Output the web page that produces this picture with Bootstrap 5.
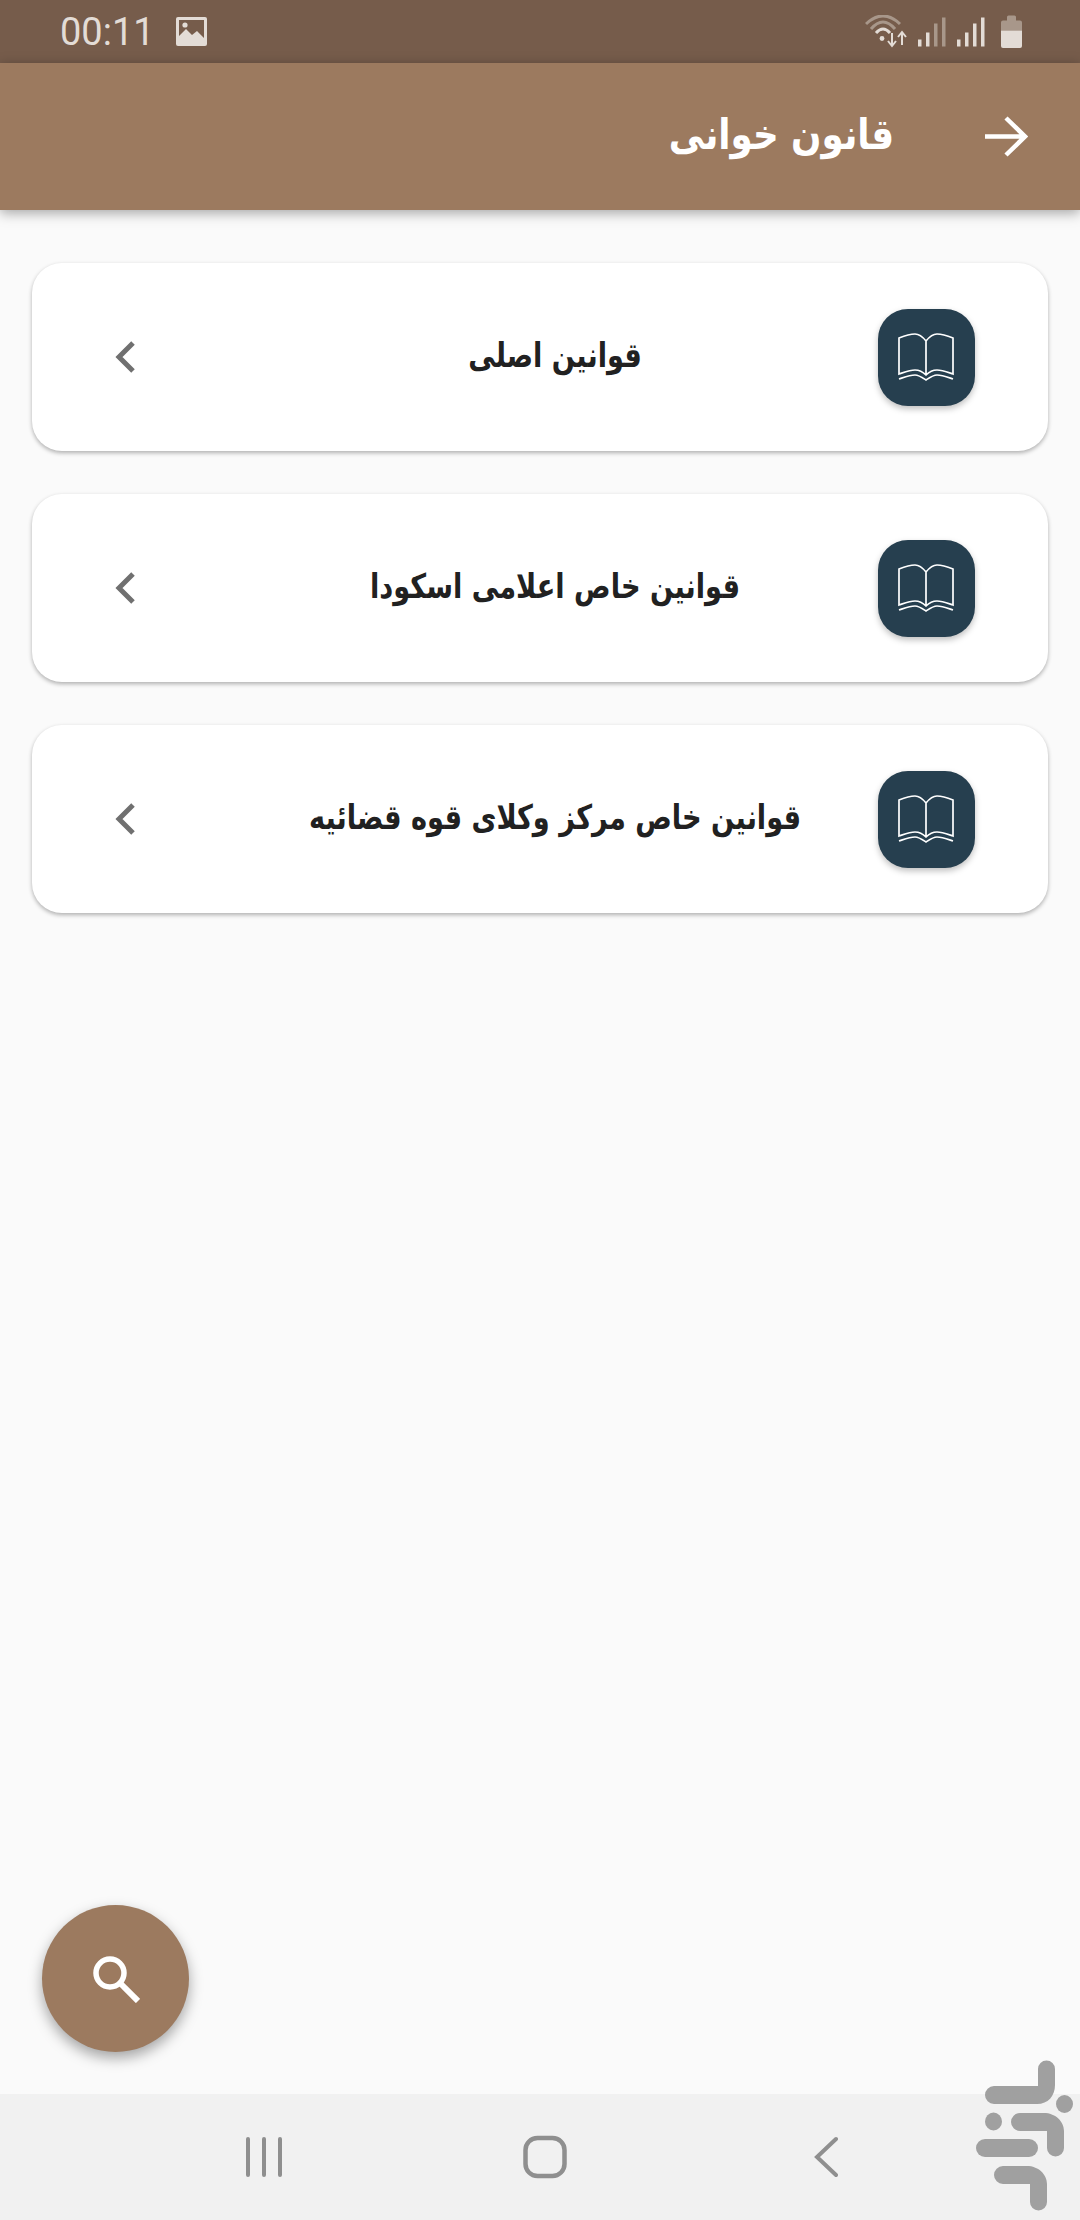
<!DOCTYPE html><html lang="fa" dir="rtl">
<head>
  <meta charset="UTF-8">
  <meta name="viewport" content="width=device-width, initial-scale=1.0">
  <title>قانون خوانی</title>
  <link href="https://cdn.jsdelivr.net/npm/bootstrap@5.3.0/dist/css/bootstrap.min.css" rel="stylesheet">
  <style>
    body { margin: 0; background-color: #fafafa; font-family: "DejaVu Sans", "Noto Sans", sans-serif; }
    .app-screen { width: 1080px; height: 2220px; overflow: hidden; }
    .status-strip { height: 63px; flex: none; padding: 0 58px 0 60px; background: #765c4b; color: #e3dcd6; font-family: Roboto, sans-serif; font-size: 38px; line-height: 1; }
    .status-time { width: 116px; }
    .app-head { height: 147px; flex: none; padding-right: 52px; gap: 91px; background: #9c7a5f; color: #fff; box-shadow: 0 3px 12px rgba(0,0,0,.35); z-index: 2; }
    .app-title { font-size: 42px; font-weight: 700; line-height: 1; margin: 0 0 4px; transform: scaleX(.85); transform-origin: right center; }
    .law-list { padding: 53px 32px 0; gap: 43px; }
    .law-card { height: 188px; flex-direction: row; align-items: center; padding: 0 73px 0 83px; border: 0; border-radius: 30px; background: #fff; box-shadow: 0 2px 4px rgba(0,0,0,.3); }
    .law-tile { width: 97px; height: 97px; flex: none; border-radius: 30px; background: #263f4f; box-shadow: 0 3px 6px rgba(0,0,0,.25); }
    .law-name { color: #212121; font-size: 34px; font-weight: 700; line-height: 1; margin-bottom: 4px; transform: scaleX(.8); }
    .law-chev { width: 117px; flex: none; }
    .nav-strip { height: 126px; flex: none; background: #f1f1f1; padding: 0 242px 0 246px; }
    .fab-search { left: 42px; bottom: 168px; width: 147px; height: 147px; background: #9c7a5f; box-shadow: 0 6px 14px rgba(0,0,0,.35); }
    .store-mark { left: 974px; top: 2058px; }
  </style>
</head>
<body>
  <svg class="d-none">
    <symbol id="book-ico" viewBox="0 0 57 49"><g fill="none" stroke="#fff" stroke-width="1.700"><path d="M28 8C24 3 20 1 17 1 12 1 6 3 1 5v36c6-2 11-4 16-4 4 0 8 2 11 5 3-3 7-5 11-5 5 0 10 2 16 4V5C50 3 44 1 39 1c-3 0-7 2-11 7zM28 8v34"/><path d="M1 46c6-2 11-4 16-4 4 0 8 3 11 5 3-2 7-5 11-5 5 0 10 2 16 4"/></g></symbol>
    <symbol id="chev-ico" viewBox="0 0 20 32"><path d="M18 2 4 16l14 14" fill="none" stroke="#707070" stroke-width="5"/></symbol>
  </svg>
  <div class="app-screen position-relative d-flex flex-column">

    <div class="status-strip d-flex align-items-center justify-content-between" dir="ltr">
      <div class="d-flex align-items-center">
        <span class="status-time">00:11</span>
        <svg width="31" height="29" viewBox="0 0 31 29"><rect width="31" height="29" rx="2" fill="#e3dcd6"/><rect x="3" y="3" width="25" height="23" fill="#765c4b"/><path d="M3 26V19l7-7 6 6 5-4 7 7v5z" fill="#e3dcd6"/><circle cx="9" cy="8" r="2.6" fill="#e3dcd6"/></svg>
      </div>
      <svg width="157" height="34" viewBox="0 0 157 34" fill="none">
        <path d="M1 9Q18-7 35 9M6 14Q18 0 30 14" stroke="#a8978a" stroke-width="3"/>
        <path d="M11 18Q18 10 25 18" stroke="#e3dcd6" stroke-width="3"/>
        <circle cx="17" cy="23.500" r="2.400" fill="#e3dcd6"/>
        <path d="M27 18v12M23 26l4 5 4-5M37 30V18M33 22l4-5 4 5" stroke="#e3dcd6" stroke-width="2"/>
        <g fill="#e3dcd6"><rect x="53" y="24.500" width="3.500" height="7"/><rect x="61" y="17.500" width="3.500" height="14"/><rect x="92" y="24.500" width="3.500" height="7"/><rect x="100" y="17.500" width="3.500" height="14"/><rect x="108" y="8.500" width="3.500" height="23"/><rect x="116" y="2.500" width="3.500" height="29"/></g>
        <g fill="#a8978a"><rect x="69" y="8.500" width="3.500" height="23"/><rect x="77" y="2.500" width="3.500" height="29"/></g>
        <path d="M142 2a1.500 1.500 0 0 1 1.500-1.500h6a1.500 1.500 0 0 1 1.500 1.500v3.500h4a2 2 0 0 1 2 2v8h-21v-8a2 2 0 0 1 2-2h4z" fill="#a8978a"/>
        <path d="M136 15.500h21V31a2 2 0 0 1-2 2h-17a2 2 0 0 1-2-2z" fill="#e3dcd6"/>
      </svg>
    </div>

    <header class="app-head position-relative d-flex align-items-center">
      <svg width="43" height="41" viewBox="0 0 43 41" fill="none" stroke="#fff" stroke-width="4.500"><path d="M0 20.500h40M21 2l19 18.500L21 39"/></svg>
      <h1 class="app-title">قانون خوانی</h1>
    </header>

    <main class="law-list d-flex flex-column flex-grow-1">
      <div class="card law-card">
        <div class="law-tile d-flex align-items-center justify-content-center"><svg width="57" height="49"><use href="#book-ico"/></svg></div>
        <div class="law-name flex-grow-1 text-center">قوانین اصلی</div>
        <div class="law-chev d-flex justify-content-end"><svg width="20" height="32"><use href="#chev-ico"/></svg></div>
      </div>
      <div class="card law-card">
        <div class="law-tile d-flex align-items-center justify-content-center"><svg width="57" height="49"><use href="#book-ico"/></svg></div>
        <div class="law-name flex-grow-1 text-center">قوانین خاص اعلامی اسکودا</div>
        <div class="law-chev d-flex justify-content-end"><svg width="20" height="32"><use href="#chev-ico"/></svg></div>
      </div>
      <div class="card law-card">
        <div class="law-tile d-flex align-items-center justify-content-center"><svg width="57" height="49"><use href="#book-ico"/></svg></div>
        <div class="law-name flex-grow-1 text-center">قوانین خاص مرکز وکلای قوه قضائیه</div>
        <div class="law-chev d-flex justify-content-end"><svg width="20" height="32"><use href="#chev-ico"/></svg></div>
      </div>
    </main>

    <button class="fab-search btn position-absolute rounded-circle border-0 p-0 d-flex align-items-center justify-content-center" type="button">
      <svg width="48" height="48" viewBox="0 0 48 48" fill="none" stroke="#fff" stroke-width="5.500"><circle cx="18" cy="18" r="14"/><path d="M28 28l18 18" stroke-width="6"/></svg>
    </button>

    <nav class="nav-strip d-flex align-items-center justify-content-between" dir="ltr">
      <svg width="36" height="42" viewBox="0 0 36 42" fill="none" stroke="#8f8f8f" stroke-width="4" stroke-linecap="round"><path d="M2 3v36M18 3v36M34 3v36"/></svg>
      <svg width="44" height="44" viewBox="0 0 44 44" fill="none" stroke="#8f8f8f" stroke-width="4.500"><rect x="2.500" y="3" width="39" height="38" rx="12"/></svg>
      <svg width="30" height="42" viewBox="0 0 30 42" fill="none" stroke="#8f8f8f" stroke-width="4" stroke-linecap="round"><path d="M28 3 9 21l19 18"/></svg>
    </nav>

    <svg class="store-mark position-absolute" width="100" height="154" viewBox="0 0 100 154" fill="#a0a0a0">
      <path d="M64 11a8.500 8.500 0 0 1 17 0v16c0 11-7 19-18 19H20a9 9 0 0 1 0-18h44z"/>
      <ellipse cx="90.500" cy="46" rx="8.500" ry="9"/>
      <ellipse cx="19.500" cy="63.500" rx="8.500" ry="9"/>
      <path d="M46 55h24c11 0 20 8 20 18v17a8.500 8.500 0 0 1-17 0V73H46a9 9 0 0 1 0-18z"/>
      <rect x="2" y="81" width="62" height="18" rx="9"/>
      <path d="M29 108h24c11 0 20 8 20 18v18a8.500 8.500 0 0 1-17 0v-18H29a9 9 0 0 1 0-18z"/>
    </svg>
  </div>
  <script src="https://cdn.jsdelivr.net/npm/bootstrap@5.3.0/dist/js/bootstrap.bundle.min.js"></script>
</body>
</html>
